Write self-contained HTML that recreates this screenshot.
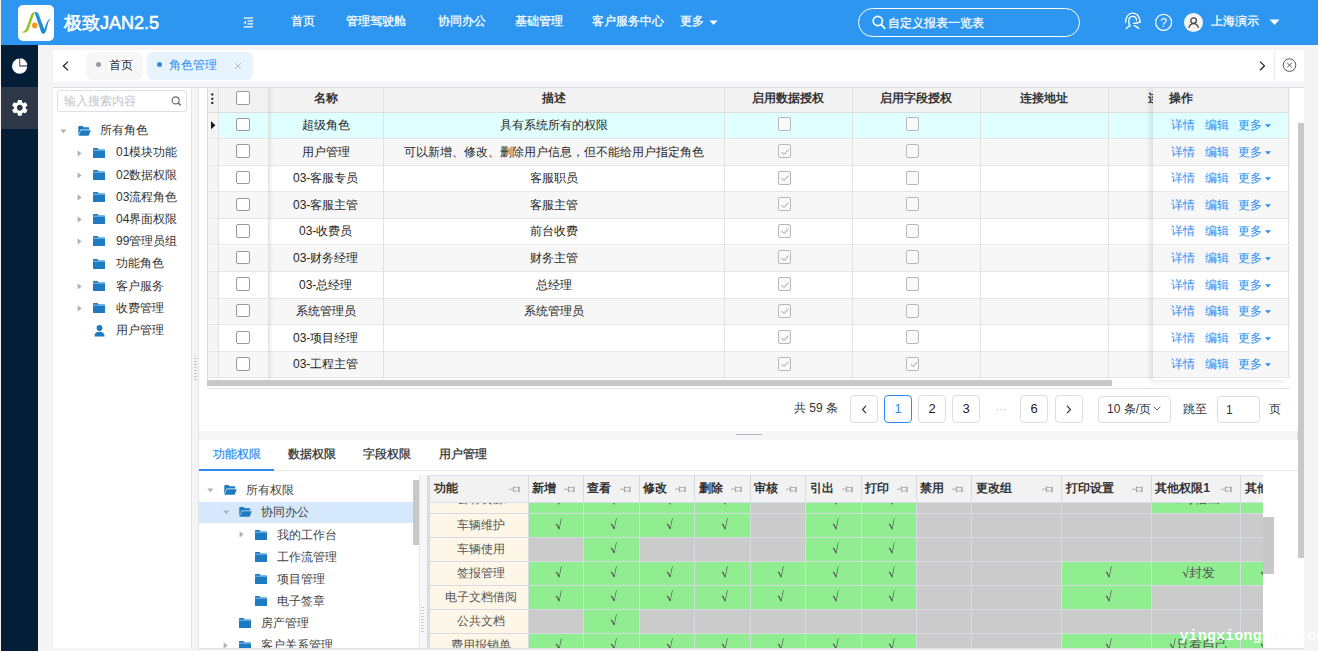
<!DOCTYPE html>
<html><head><meta charset="utf-8">
<style>
*{box-sizing:border-box;margin:0;padding:0}
html,body{width:1318px;height:651px;overflow:hidden;background:#f4f4f4;font-family:"Liberation Sans",sans-serif;font-size:12px;color:#333}
.a{position:absolute}
#hdr{left:0;top:0;width:1318px;height:45px;background:#2d96f1}
#leftline{left:0;top:0;width:1px;height:651px;background:#f4efe8;z-index:5}
#side{left:1px;top:45px;width:37px;height:606px;background:#041e38}
#side .it2{left:0;top:42px;width:37px;height:42px;background:#2e3747}
.logo{left:18px;top:5px;width:36px;height:36px;background:#fff;border-radius:5px}
.brand{left:64px;top:10.8px;font-size:18px;font-weight:normal;-webkit-text-stroke:0.55px #fff;color:#fff;line-height:24px;white-space:nowrap}
.nav{top:12px;font-size:12px;color:#fff;line-height:18px;white-space:nowrap;-webkit-text-stroke:0.25px #fff}
.search{left:858px;top:8px;width:222px;height:29px;border:1px solid #fff;border-radius:15px;color:#fff}
.avatar{left:1184px;top:13px;width:19px;height:19px;border-radius:50%;background:#f7f6f4}
.tabbar{left:53px;top:50px;width:1251px;height:32px;background:#fff}
.tab{top:2px;height:28px;border-radius:6px;font-size:12px;white-space:nowrap}
#lp{left:53px;top:87px;width:139px;height:561px;background:#fff;border-right:1px solid #e4e4e4}
#mp{left:198px;top:87px;width:1106px;height:344px;background:#fff;border-left:1px solid #e4e4e4}
#bp{left:198px;top:440px;width:1106px;height:208px;background:#fff;border-left:1px solid #e4e4e4}
.tt{font-size:12px;line-height:16px;color:#333;white-space:nowrap}
.th{font-size:12px;font-weight:bold;line-height:16px;color:#333;text-align:center;white-space:nowrap}
.td{font-size:12px;line-height:16px;color:#262626;text-align:center;white-space:nowrap}
.op{font-size:12px;line-height:16px;color:#2d8cf0;white-space:nowrap}
.cb{width:13.6px;height:13.6px;border:1px solid #999;border-radius:2px;background:#fff}
.cb2{width:13px;height:14px;border:1px solid #b8b8b8;border-radius:2px;background:#f9f9f9}
.fn{font-size:12px;line-height:16px;color:#555;text-align:center;white-space:nowrap}
.chk{font-size:13px;line-height:16px;color:#555;text-align:center;white-space:nowrap}
.th{margin-top:-2px}
.td,.op{margin-top:-1px}
.tt{margin-top:-1.7px}
.tab span{margin-top:-1.5px}

</style></head><body>
<div id="leftline" class="a"></div>
<div id="hdr" class="a">
  <div class="a logo"><svg width="36" height="36" viewBox="0 0 36 36">
    <path d="M3.6 27.2 Q8.6 28.8 10.6 24.6 L16.8 6.8 Q14.2 7.2 13 10 L8 24 Q6.8 26.6 3.6 27.2 Z" fill="#8fc31f"/>
    <path d="M16.6 7.6 Q18.6 6.2 20.4 8.8 L26.4 24.6 Q27.6 19.6 29.2 16.8 Q30.6 14.2 32.6 13.4 Q30.4 16 29.4 20.4 Q28.4 26.4 26.4 28.6 Q24.6 29.8 23.2 27.2 Z" fill="#1a8fd6"/>
    <circle cx="16.8" cy="20.4" r="2.8" fill="#f39a1e"/>
  </svg></div>
  <div class="a brand">极致JAN2.5</div>
  <svg class="a" style="left:243px;top:17px" width="11" height="11" viewBox="0 0 11 11">
    <g fill="#fff" opacity="0.75"><rect x="0.8" y="0.2" width="9.3" height="1.7"/><rect x="4.5" y="3.2" width="5.6" height="1.6"/><rect x="4.5" y="6" width="5.6" height="1.7"/><rect x="0.8" y="9" width="9.3" height="1.7"/></g>
    <path d="M0.6 5.5 L3 3.8 L3 7.2 Z" fill="#fff"/>
  </svg>
  <div class="a nav" style="left:291px">首页</div>
  <div class="a nav" style="left:346px">管理驾驶舱</div>
  <div class="a nav" style="left:438px">协同办公</div>
  <div class="a nav" style="left:515px">基础管理</div>
  <div class="a nav" style="left:592px">客户服务中心</div>
  <div class="a nav" style="left:680px">更多</div>
  <svg class="a" style="left:708.6px;top:19.7px" width="9" height="6" viewBox="0 0 9 6"><path d="M0.5 0.5 L8.5 0.5 L4.5 5 Z" fill="#fff"/></svg>
  <div class="a search"><svg class="a" style="left:13px;top:6px" width="14" height="15" viewBox="0 0 14 15"><circle cx="5.8" cy="6" r="4.6" stroke="#fff" stroke-width="1.7" fill="none"/><path d="M9.2 9.6 L12.6 13.2" stroke="#fff" stroke-width="1.9" stroke-linecap="round"/></svg><span class="a" style="left:29px;top:5px;font-size:12px;line-height:18px;-webkit-text-stroke:0.25px #fff">自定义报表一览表</span></div>
  <svg class="a" style="left:1124px;top:12px" width="18" height="18" viewBox="0 0 18 18" fill="none" stroke="#fff" stroke-width="1.25" stroke-linecap="round">
    <path d="M1.6 10.5 C1.4 5 4.5 1.2 8.5 1.2 C12.5 1.2 15.5 4.5 16.2 9.8"/>
    <path d="M6 13.6 C4.6 12.5 4.6 10.5 4.8 8.5 C5 6 6.5 4.4 8.6 4.4 C10.8 4.4 12.6 6 12.6 8.6"/>
    <path d="M16.2 9.8 C15 11 12 11.4 9.4 11.4"/>
    <path d="M6 13.6 C4.5 14.4 3 15.2 2.2 16.6"/>
    <path d="M10.4 13.6 C12 14.3 14 15.3 14.8 16.6"/>
  </svg>
  <svg class="a" style="left:1154px;top:13px" width="19" height="19" viewBox="0 0 19 19"><circle cx="9.6" cy="9.3" r="8" stroke="#fff" stroke-width="1.2" fill="none"/><text x="9.6" y="13.6" text-anchor="middle" font-family="Liberation Sans" font-size="12" fill="#fff">?</text></svg>
  <div class="a avatar"><svg class="a" style="left:4px;top:3px" width="12" height="13" viewBox="0 0 12 13" fill="none" stroke="#444" stroke-width="1.3"><circle cx="5.6" cy="4.6" r="2.8"/><path d="M0.8 11.8 C1.4 9 3.2 7.6 5.6 7.6 C8 7.6 9.8 9 10.4 11.8"/></svg></div>
  <div class="a nav" style="left:1211px">上海演示</div>
  <svg class="a" style="left:1269px;top:19px" width="11" height="7" viewBox="0 0 11 7"><path d="M0.5 0.5 L10.5 0.5 L5.5 6 Z" fill="#fff"/></svg>
</div>
<div id="side" class="a">
  <svg class="a" style="left:10.8px;top:13.4px" width="16" height="16" viewBox="0 0 16 16"><path d="M7.4 0.6 L7.4 8.4 L15.2 8.4 A7.6 7.6 0 1 1 7.4 0.6 Z" fill="#fff"/><path d="M8.2 0.3 A7.1 7.1 0 0 1 15.3 7.4 L8.2 7.4 Z" fill="#fff"/></svg>
  <div class="a it2"><svg class="a" style="left:8.8px;top:11.3px" width="19.6" height="19.6" viewBox="0 0 24 24"><path fill="#fff" d="M19.14 12.94c.04-.3.06-.61.06-.94 0-.32-.02-.64-.07-.94l2.03-1.58a.49.49 0 0 0 .12-.61l-1.92-3.32a.488.488 0 0 0-.59-.22l-2.39.96c-.5-.38-1.03-.7-1.62-.94l-.36-2.54a.484.484 0 0 0-.48-.41h-3.84c-.24 0-.43.17-.47.41l-.36 2.54c-.59.24-1.13.57-1.62.94l-2.39-.96c-.22-.08-.47 0-.59.22L2.74 8.87c-.12.21-.08.47.12.61l2.03 1.58c-.05.3-.09.63-.09.94s.02.64.07.94l-2.03 1.58a.49.49 0 0 0-.12.61l1.92 3.32c.12.22.37.29.59.22l2.39-.96c.5.38 1.03.7 1.62.94l.36 2.54c.05.24.24.41.48.41h3.84c.24 0 .44-.17.47-.41l.36-2.54c.59-.24 1.13-.56 1.62-.94l2.39.96c.22.08.47 0 .59-.22l1.92-3.32c.12-.22.07-.47-.12-.61l-2.01-1.58zM12 15.6c-1.98 0-3.6-1.62-3.6-3.6s1.62-3.6 3.6-3.6 3.6 1.62 3.6 3.6-1.62 3.6-3.6 3.6z"/></svg></div>
</div>
<div class="a tabbar">
  <svg class="a" style="left:9px;top:11px" width="7" height="10" viewBox="0 0 7 10"><path d="M6 0.6 L1.4 5 L6 9.4" stroke="#222" stroke-width="1.3" fill="none"/></svg>
  <div class="a tab" style="left:33px;width:57px;background:#f7f7f7"><span class="a" style="left:10px;top:11px;width:5px;height:5px;border-radius:50%;background:#999"></span><span class="a" style="left:22px;top:0;background:#fff;line-height:14px;top:7px;padding:0 1px;color:#222">首页</span></div>
  <div class="a tab" style="left:94px;width:106px;background:#e8f4fd;color:#2d8cf0"><span class="a" style="left:10px;top:11px;width:5px;height:5px;border-radius:50%;background:#2d8cf0"></span><span class="a" style="left:22px;top:7px;line-height:14px">角色管理</span><svg class="a" style="left:87px;top:10px" width="8" height="8" viewBox="0 0 8 8"><path d="M1 1 L7 7 M7 1 L1 7" stroke="#bbb" stroke-width="1"/></svg></div>
  <svg class="a" style="left:1205.5px;top:10.6px" width="7" height="10" viewBox="0 0 7 10"><path d="M1 0.6 L5.4 4.9 L1 9.2" stroke="#222" stroke-width="1.3" fill="none"/></svg>
  <div class="a" style="left:1221px;top:0;width:1px;height:32px;background:#eee"></div>
  <svg class="a" style="left:1229px;top:8px" width="16" height="16" viewBox="0 0 16 16"><circle cx="7.5" cy="7.1" r="6.3" stroke="#555" stroke-width="1" fill="none"/><path d="M5.1 4.7 L9.9 9.5 M9.9 4.7 L5.1 9.5" stroke="#555" stroke-width="1"/></svg>
</div>
<div id="lp" class="a">
<div class="a" style="left:4px;top:3px;width:130px;height:22px;border:1px solid #dcdfe6;border-radius:3px"><span class="a" style="left:6px;top:3px;font-size:12px;line-height:14px;color:#c0c4cc;white-space:nowrap">输入搜索内容</span><svg class="a" style="left:113px;top:5px" width="11" height="11" viewBox="0 0 11 11"><circle cx="4.6" cy="4.4" r="3.5" stroke="#666" stroke-width="1.1" fill="none"/><path d="M7.2 7 L9.8 9.5" stroke="#666" stroke-width="1.4"/></svg></div>
<svg class="a" style="left:6.5px;top:41.5px" width="7" height="5" viewBox="0 0 7 5"><path d="M0.3 0.5 L6.5 0.5 L3.4 4.3 Z" fill="#abb1bb"/></svg>
<svg class="a" style="left:25px;top:39.0px" width="13" height="11" viewBox="0 0 13 11"><path d="M0.3 1 Q0.3 0 1.2 0 L4.6 0 L5.6 1.3 L10.6 1.3 Q11.2 1.3 11.2 2 L11.2 3.4 L2.6 3.4 L0.3 9.5 Z" fill="#1f7bc1"/><path d="M2.8 4.2 L12.8 4.2 L10.6 9.7 L0.6 9.7 Z" fill="#1f7bc1"/></svg>
<span class="a tt" style="left:47px;top:37.0px">所有角色</span>
<svg class="a" style="left:24px;top:62.67px" width="5" height="7" viewBox="0 0 5 7"><path d="M0.6 0.2 L4.6 3.4 L0.6 6.6 Z" fill="#abb1bb"/></svg>
<svg class="a" style="left:40px;top:60.67px" width="12" height="10" viewBox="0 0 12 10"><path d="M0 0.6 Q0 0 0.6 0 L4.6 0 L5.6 1.4 L11.4 1.4 Q12 1.4 12 2 L12 9.4 Q12 10 11.4 10 L0.6 10 Q0 10 0 9.4 Z" fill="#1f7bc1"/><rect x="0" y="1.6" width="12" height="1.3" fill="#6aaee0"/></svg>
<span class="a tt" style="left:63px;top:59.17px">01模块功能</span>
<svg class="a" style="left:24px;top:84.84px" width="5" height="7" viewBox="0 0 5 7"><path d="M0.6 0.2 L4.6 3.4 L0.6 6.6 Z" fill="#abb1bb"/></svg>
<svg class="a" style="left:40px;top:82.84px" width="12" height="10" viewBox="0 0 12 10"><path d="M0 0.6 Q0 0 0.6 0 L4.6 0 L5.6 1.4 L11.4 1.4 Q12 1.4 12 2 L12 9.4 Q12 10 11.4 10 L0.6 10 Q0 10 0 9.4 Z" fill="#1f7bc1"/><rect x="0" y="1.6" width="12" height="1.3" fill="#6aaee0"/></svg>
<span class="a tt" style="left:63px;top:81.34px">02数据权限</span>
<svg class="a" style="left:24px;top:107.01px" width="5" height="7" viewBox="0 0 5 7"><path d="M0.6 0.2 L4.6 3.4 L0.6 6.6 Z" fill="#abb1bb"/></svg>
<svg class="a" style="left:40px;top:105.01px" width="12" height="10" viewBox="0 0 12 10"><path d="M0 0.6 Q0 0 0.6 0 L4.6 0 L5.6 1.4 L11.4 1.4 Q12 1.4 12 2 L12 9.4 Q12 10 11.4 10 L0.6 10 Q0 10 0 9.4 Z" fill="#1f7bc1"/><rect x="0" y="1.6" width="12" height="1.3" fill="#6aaee0"/></svg>
<span class="a tt" style="left:63px;top:103.51px">03流程角色</span>
<svg class="a" style="left:24px;top:129.18px" width="5" height="7" viewBox="0 0 5 7"><path d="M0.6 0.2 L4.6 3.4 L0.6 6.6 Z" fill="#abb1bb"/></svg>
<svg class="a" style="left:40px;top:127.18px" width="12" height="10" viewBox="0 0 12 10"><path d="M0 0.6 Q0 0 0.6 0 L4.6 0 L5.6 1.4 L11.4 1.4 Q12 1.4 12 2 L12 9.4 Q12 10 11.4 10 L0.6 10 Q0 10 0 9.4 Z" fill="#1f7bc1"/><rect x="0" y="1.6" width="12" height="1.3" fill="#6aaee0"/></svg>
<span class="a tt" style="left:63px;top:125.68px">04界面权限</span>
<svg class="a" style="left:24px;top:151.35px" width="5" height="7" viewBox="0 0 5 7"><path d="M0.6 0.2 L4.6 3.4 L0.6 6.6 Z" fill="#abb1bb"/></svg>
<svg class="a" style="left:40px;top:149.35px" width="12" height="10" viewBox="0 0 12 10"><path d="M0 0.6 Q0 0 0.6 0 L4.6 0 L5.6 1.4 L11.4 1.4 Q12 1.4 12 2 L12 9.4 Q12 10 11.4 10 L0.6 10 Q0 10 0 9.4 Z" fill="#1f7bc1"/><rect x="0" y="1.6" width="12" height="1.3" fill="#6aaee0"/></svg>
<span class="a tt" style="left:63px;top:147.85px">99管理员组</span>
<svg class="a" style="left:40px;top:171.52px" width="12" height="10" viewBox="0 0 12 10"><path d="M0 0.6 Q0 0 0.6 0 L4.6 0 L5.6 1.4 L11.4 1.4 Q12 1.4 12 2 L12 9.4 Q12 10 11.4 10 L0.6 10 Q0 10 0 9.4 Z" fill="#1f7bc1"/><rect x="0" y="1.6" width="12" height="1.3" fill="#6aaee0"/></svg>
<span class="a tt" style="left:63px;top:170.02px">功能角色</span>
<svg class="a" style="left:24px;top:195.69px" width="5" height="7" viewBox="0 0 5 7"><path d="M0.6 0.2 L4.6 3.4 L0.6 6.6 Z" fill="#abb1bb"/></svg>
<svg class="a" style="left:40px;top:193.69px" width="12" height="10" viewBox="0 0 12 10"><path d="M0 0.6 Q0 0 0.6 0 L4.6 0 L5.6 1.4 L11.4 1.4 Q12 1.4 12 2 L12 9.4 Q12 10 11.4 10 L0.6 10 Q0 10 0 9.4 Z" fill="#1f7bc1"/><rect x="0" y="1.6" width="12" height="1.3" fill="#6aaee0"/></svg>
<span class="a tt" style="left:63px;top:192.19px">客户服务</span>
<svg class="a" style="left:24px;top:217.86px" width="5" height="7" viewBox="0 0 5 7"><path d="M0.6 0.2 L4.6 3.4 L0.6 6.6 Z" fill="#abb1bb"/></svg>
<svg class="a" style="left:40px;top:215.86px" width="12" height="10" viewBox="0 0 12 10"><path d="M0 0.6 Q0 0 0.6 0 L4.6 0 L5.6 1.4 L11.4 1.4 Q12 1.4 12 2 L12 9.4 Q12 10 11.4 10 L0.6 10 Q0 10 0 9.4 Z" fill="#1f7bc1"/><rect x="0" y="1.6" width="12" height="1.3" fill="#6aaee0"/></svg>
<span class="a tt" style="left:63px;top:214.36px">收费管理</span>
<svg class="a" style="left:40.8px;top:237.53px" width="11" height="12" viewBox="0 0 11 12"><circle cx="5.5" cy="3" r="2.9" fill="#1f7bc1"/><path d="M0.4 11.6 Q0.4 6.8 5.5 6.8 Q10.6 6.8 10.6 11.6 Z" fill="#1f7bc1"/></svg>
<span class="a tt" style="left:63px;top:236.53px">用户管理</span>
</div>
<div class="a" style="left:191px;top:87px;width:1px;height:561px;background:#e4e4e4"></div>
<div id="mp" class="a"></div>
<div class="a" style="left:194px;top:358px;width:3px;height:24px;background:repeating-linear-gradient(#c8c8c8 0 1px,transparent 1px 3px)"></div>
<div class="a" style="left:207px;top:87px;width:1083px;height:300px;overflow:hidden">
<div class="a" style="left:0;top:0;width:1083px;height:25.5px;background:#f2f2f2;border-bottom:1px solid #dedede"></div>
<div class="a th" style="left:61.30000000000001px;top:5px;width:114.69999999999999px">名称</div>
<div class="a th" style="left:176px;top:5px;width:341px">描述</div>
<div class="a th" style="left:517px;top:5px;width:128px">启用数据授权</div>
<div class="a th" style="left:645px;top:5px;width:128px">启用字段授权</div>
<div class="a th" style="left:773px;top:5px;width:128px">连接地址</div>
<div class="a th" style="left:901px;top:5px;width:128px">连接类型</div>
<div class="a" style="left:10.5px;top:25.50px;width:1073px;height:26.60px;background:#e0ffff;border-bottom:1px solid #e6e6e6"></div>
<div class="a" style="left:0;top:25.50px;width:10.5px;height:26.60px;background:#f5f5f5;border-bottom:1px solid #e6e6e6"></div>
<div class="a td" style="left:61.30000000000001px;top:31.00px;width:114.69999999999999px">超级角色</div>
<div class="a td" style="left:176px;top:31.00px;width:341px">具有系统所有的权限</div>
<div class="a cb" style="left:29.19999999999999px;top:30.70px"></div>
<div class="a cb2" style="left:570.8px;top:30.40px"></div>
<div class="a cb2" style="left:699.2px;top:30.40px"></div>
<svg class="a" style="left:4px;top:34.40px" width="5" height="9" viewBox="0 0 5 9"><path d="M0 0.2 L4.4 4.2 L0 8.3 Z" fill="#111"/></svg>
<div class="a" style="left:10.5px;top:52.10px;width:1073px;height:26.60px;background:#f7f7f7;border-bottom:1px solid #e6e6e6"></div>
<div class="a" style="left:0;top:52.10px;width:10.5px;height:26.60px;background:#f5f5f5;border-bottom:1px solid #e6e6e6"></div>
<div class="a td" style="left:61.30000000000001px;top:57.60px;width:114.69999999999999px">用户管理</div>
<div class="a td" style="left:176px;top:57.60px;width:341px">可以新增、修改、删除用户信息，但不能给用户指定角色</div>
<div class="a cb" style="left:29.19999999999999px;top:57.30px"></div>
<div class="a cb2" style="left:570.8px;top:57.00px"><svg class="a" style="left:1.5px;top:1.5px" width="10" height="10" viewBox="0 0 10 10"><path d="M1.5 5 L4 7.5 L8.6 2.6" stroke="#9a9a9a" stroke-width="1" fill="none"/></svg></div>
<div class="a cb2" style="left:699.2px;top:57.00px"></div>
<div class="a" style="left:10.5px;top:78.70px;width:1073px;height:26.60px;background:#fff;border-bottom:1px solid #e6e6e6"></div>
<div class="a" style="left:0;top:78.70px;width:10.5px;height:26.60px;background:#f5f5f5;border-bottom:1px solid #e6e6e6"></div>
<div class="a td" style="left:61.30000000000001px;top:84.20px;width:114.69999999999999px">03-客服专员</div>
<div class="a td" style="left:176px;top:84.20px;width:341px">客服职员</div>
<div class="a cb" style="left:29.19999999999999px;top:83.90px"></div>
<div class="a cb2" style="left:570.8px;top:83.60px"><svg class="a" style="left:1.5px;top:1.5px" width="10" height="10" viewBox="0 0 10 10"><path d="M1.5 5 L4 7.5 L8.6 2.6" stroke="#9a9a9a" stroke-width="1" fill="none"/></svg></div>
<div class="a cb2" style="left:699.2px;top:83.60px"></div>
<div class="a" style="left:10.5px;top:105.30px;width:1073px;height:26.60px;background:#f7f7f7;border-bottom:1px solid #e6e6e6"></div>
<div class="a" style="left:0;top:105.30px;width:10.5px;height:26.60px;background:#f5f5f5;border-bottom:1px solid #e6e6e6"></div>
<div class="a td" style="left:61.30000000000001px;top:110.80px;width:114.69999999999999px">03-客服主管</div>
<div class="a td" style="left:176px;top:110.80px;width:341px">客服主管</div>
<div class="a cb" style="left:29.19999999999999px;top:110.50px"></div>
<div class="a cb2" style="left:570.8px;top:110.20px"><svg class="a" style="left:1.5px;top:1.5px" width="10" height="10" viewBox="0 0 10 10"><path d="M1.5 5 L4 7.5 L8.6 2.6" stroke="#9a9a9a" stroke-width="1" fill="none"/></svg></div>
<div class="a cb2" style="left:699.2px;top:110.20px"></div>
<div class="a" style="left:10.5px;top:131.90px;width:1073px;height:26.60px;background:#fff;border-bottom:1px solid #e6e6e6"></div>
<div class="a" style="left:0;top:131.90px;width:10.5px;height:26.60px;background:#f5f5f5;border-bottom:1px solid #e6e6e6"></div>
<div class="a td" style="left:61.30000000000001px;top:137.40px;width:114.69999999999999px">03-收费员</div>
<div class="a td" style="left:176px;top:137.40px;width:341px">前台收费</div>
<div class="a cb" style="left:29.19999999999999px;top:137.10px"></div>
<div class="a cb2" style="left:570.8px;top:136.80px"><svg class="a" style="left:1.5px;top:1.5px" width="10" height="10" viewBox="0 0 10 10"><path d="M1.5 5 L4 7.5 L8.6 2.6" stroke="#9a9a9a" stroke-width="1" fill="none"/></svg></div>
<div class="a cb2" style="left:699.2px;top:136.80px"></div>
<div class="a" style="left:10.5px;top:158.50px;width:1073px;height:26.60px;background:#f7f7f7;border-bottom:1px solid #e6e6e6"></div>
<div class="a" style="left:0;top:158.50px;width:10.5px;height:26.60px;background:#f5f5f5;border-bottom:1px solid #e6e6e6"></div>
<div class="a td" style="left:61.30000000000001px;top:164.00px;width:114.69999999999999px">03-财务经理</div>
<div class="a td" style="left:176px;top:164.00px;width:341px">财务主管</div>
<div class="a cb" style="left:29.19999999999999px;top:163.70px"></div>
<div class="a cb2" style="left:570.8px;top:163.40px"><svg class="a" style="left:1.5px;top:1.5px" width="10" height="10" viewBox="0 0 10 10"><path d="M1.5 5 L4 7.5 L8.6 2.6" stroke="#9a9a9a" stroke-width="1" fill="none"/></svg></div>
<div class="a cb2" style="left:699.2px;top:163.40px"></div>
<div class="a" style="left:10.5px;top:185.10px;width:1073px;height:26.60px;background:#fff;border-bottom:1px solid #e6e6e6"></div>
<div class="a" style="left:0;top:185.10px;width:10.5px;height:26.60px;background:#f5f5f5;border-bottom:1px solid #e6e6e6"></div>
<div class="a td" style="left:61.30000000000001px;top:190.60px;width:114.69999999999999px">03-总经理</div>
<div class="a td" style="left:176px;top:190.60px;width:341px">总经理</div>
<div class="a cb" style="left:29.19999999999999px;top:190.30px"></div>
<div class="a cb2" style="left:570.8px;top:190.00px"><svg class="a" style="left:1.5px;top:1.5px" width="10" height="10" viewBox="0 0 10 10"><path d="M1.5 5 L4 7.5 L8.6 2.6" stroke="#9a9a9a" stroke-width="1" fill="none"/></svg></div>
<div class="a cb2" style="left:699.2px;top:190.00px"></div>
<div class="a" style="left:10.5px;top:211.70px;width:1073px;height:26.60px;background:#f7f7f7;border-bottom:1px solid #e6e6e6"></div>
<div class="a" style="left:0;top:211.70px;width:10.5px;height:26.60px;background:#f5f5f5;border-bottom:1px solid #e6e6e6"></div>
<div class="a td" style="left:61.30000000000001px;top:217.20px;width:114.69999999999999px">系统管理员</div>
<div class="a td" style="left:176px;top:217.20px;width:341px">系统管理员</div>
<div class="a cb" style="left:29.19999999999999px;top:216.90px"></div>
<div class="a cb2" style="left:570.8px;top:216.60px"><svg class="a" style="left:1.5px;top:1.5px" width="10" height="10" viewBox="0 0 10 10"><path d="M1.5 5 L4 7.5 L8.6 2.6" stroke="#9a9a9a" stroke-width="1" fill="none"/></svg></div>
<div class="a cb2" style="left:699.2px;top:216.60px"></div>
<div class="a" style="left:10.5px;top:238.30px;width:1073px;height:26.60px;background:#fff;border-bottom:1px solid #e6e6e6"></div>
<div class="a" style="left:0;top:238.30px;width:10.5px;height:26.60px;background:#f5f5f5;border-bottom:1px solid #e6e6e6"></div>
<div class="a td" style="left:61.30000000000001px;top:243.80px;width:114.69999999999999px">03-项目经理</div>
<div class="a cb" style="left:29.19999999999999px;top:243.50px"></div>
<div class="a cb2" style="left:570.8px;top:243.20px"><svg class="a" style="left:1.5px;top:1.5px" width="10" height="10" viewBox="0 0 10 10"><path d="M1.5 5 L4 7.5 L8.6 2.6" stroke="#9a9a9a" stroke-width="1" fill="none"/></svg></div>
<div class="a cb2" style="left:699.2px;top:243.20px"></div>
<div class="a" style="left:10.5px;top:264.90px;width:1073px;height:26.60px;background:#f7f7f7;border-bottom:1px solid #e6e6e6"></div>
<div class="a" style="left:0;top:264.90px;width:10.5px;height:26.60px;background:#f5f5f5;border-bottom:1px solid #e6e6e6"></div>
<div class="a td" style="left:61.30000000000001px;top:270.40px;width:114.69999999999999px">03-工程主管</div>
<div class="a cb" style="left:29.19999999999999px;top:270.10px"></div>
<div class="a cb2" style="left:570.8px;top:269.80px"><svg class="a" style="left:1.5px;top:1.5px" width="10" height="10" viewBox="0 0 10 10"><path d="M1.5 5 L4 7.5 L8.6 2.6" stroke="#9a9a9a" stroke-width="1" fill="none"/></svg></div>
<div class="a cb2" style="left:699.2px;top:269.80px"><svg class="a" style="left:1.5px;top:1.5px" width="10" height="10" viewBox="0 0 10 10"><path d="M1.5 5 L4 7.5 L8.6 2.6" stroke="#9a9a9a" stroke-width="1" fill="none"/></svg></div>
<div class="a" style="left:10.5px;top:0;width:1px;height:291.5px;background:#e2e2e2"></div>
<div class="a" style="left:61.30000000000001px;top:0;width:1px;height:291.5px;background:#e2e2e2"></div>
<div class="a" style="left:176px;top:0;width:1px;height:291.5px;background:#e2e2e2"></div>
<div class="a" style="left:517px;top:0;width:1px;height:291.5px;background:#e2e2e2"></div>
<div class="a" style="left:645px;top:0;width:1px;height:291.5px;background:#e2e2e2"></div>
<div class="a" style="left:773px;top:0;width:1px;height:291.5px;background:#e2e2e2"></div>
<div class="a" style="left:901px;top:0;width:1px;height:291.5px;background:#e2e2e2"></div>
<div class="a" style="left:0;top:0;width:1px;height:291.5px;background:#dcdcdc"></div>
<div class="a cb" style="left:29.19999999999999px;top:4.2px"></div>
<svg class="a" style="left:3.8px;top:6px" width="3" height="11" viewBox="0 0 3 11"><circle cx="1.3" cy="1.5" r="1.15" fill="#222"/><circle cx="1.3" cy="5.8" r="1.15" fill="#222"/><circle cx="1.3" cy="10" r="1.15" fill="#222"/></svg>
<div class="a" style="left:61.5px;top:0;width:4px;height:291.5px;background:linear-gradient(90deg,rgba(0,0,0,0.07),rgba(0,0,0,0))"></div>
<div class="a" style="left:946px;top:0;width:136px;height:292.5px;background:transparent;box-shadow:-3px 1px 5px rgba(0,0,0,0.10)"></div>
<div class="a" style="left:946px;top:0;width:136px;height:25.5px;background:#f2f2f2;border-bottom:1px solid #dedede;border-right:1px solid #e2e2e2"></div>
<div class="a th" style="left:962px;top:5px;text-align:left">操作</div>
<div class="a" style="left:946px;top:25.50px;width:136px;height:26.60px;background:#e0ffff;border-bottom:1px solid #e6e6e6;border-right:1px solid #e2e2e2"></div>
<div class="a op" style="left:964px;top:31.00px">详情</div>
<div class="a op" style="left:998px;top:31.00px">编辑</div>
<div class="a op" style="left:1031px;top:31.00px">更多</div>
<svg class="a" style="left:1057.5px;top:37.00px" width="6" height="4" viewBox="0 0 6 4"><path d="M0 0.3 L6 0.3 L3 3.4 Z" fill="#2d8cf0"/></svg>
<div class="a" style="left:946px;top:52.10px;width:136px;height:26.60px;background:#f7f7f7;border-bottom:1px solid #e6e6e6;border-right:1px solid #e2e2e2"></div>
<div class="a op" style="left:964px;top:57.60px">详情</div>
<div class="a op" style="left:998px;top:57.60px">编辑</div>
<div class="a op" style="left:1031px;top:57.60px">更多</div>
<svg class="a" style="left:1057.5px;top:63.60px" width="6" height="4" viewBox="0 0 6 4"><path d="M0 0.3 L6 0.3 L3 3.4 Z" fill="#2d8cf0"/></svg>
<div class="a" style="left:946px;top:78.70px;width:136px;height:26.60px;background:#fff;border-bottom:1px solid #e6e6e6;border-right:1px solid #e2e2e2"></div>
<div class="a op" style="left:964px;top:84.20px">详情</div>
<div class="a op" style="left:998px;top:84.20px">编辑</div>
<div class="a op" style="left:1031px;top:84.20px">更多</div>
<svg class="a" style="left:1057.5px;top:90.20px" width="6" height="4" viewBox="0 0 6 4"><path d="M0 0.3 L6 0.3 L3 3.4 Z" fill="#2d8cf0"/></svg>
<div class="a" style="left:946px;top:105.30px;width:136px;height:26.60px;background:#f7f7f7;border-bottom:1px solid #e6e6e6;border-right:1px solid #e2e2e2"></div>
<div class="a op" style="left:964px;top:110.80px">详情</div>
<div class="a op" style="left:998px;top:110.80px">编辑</div>
<div class="a op" style="left:1031px;top:110.80px">更多</div>
<svg class="a" style="left:1057.5px;top:116.80px" width="6" height="4" viewBox="0 0 6 4"><path d="M0 0.3 L6 0.3 L3 3.4 Z" fill="#2d8cf0"/></svg>
<div class="a" style="left:946px;top:131.90px;width:136px;height:26.60px;background:#fff;border-bottom:1px solid #e6e6e6;border-right:1px solid #e2e2e2"></div>
<div class="a op" style="left:964px;top:137.40px">详情</div>
<div class="a op" style="left:998px;top:137.40px">编辑</div>
<div class="a op" style="left:1031px;top:137.40px">更多</div>
<svg class="a" style="left:1057.5px;top:143.40px" width="6" height="4" viewBox="0 0 6 4"><path d="M0 0.3 L6 0.3 L3 3.4 Z" fill="#2d8cf0"/></svg>
<div class="a" style="left:946px;top:158.50px;width:136px;height:26.60px;background:#f7f7f7;border-bottom:1px solid #e6e6e6;border-right:1px solid #e2e2e2"></div>
<div class="a op" style="left:964px;top:164.00px">详情</div>
<div class="a op" style="left:998px;top:164.00px">编辑</div>
<div class="a op" style="left:1031px;top:164.00px">更多</div>
<svg class="a" style="left:1057.5px;top:170.00px" width="6" height="4" viewBox="0 0 6 4"><path d="M0 0.3 L6 0.3 L3 3.4 Z" fill="#2d8cf0"/></svg>
<div class="a" style="left:946px;top:185.10px;width:136px;height:26.60px;background:#fff;border-bottom:1px solid #e6e6e6;border-right:1px solid #e2e2e2"></div>
<div class="a op" style="left:964px;top:190.60px">详情</div>
<div class="a op" style="left:998px;top:190.60px">编辑</div>
<div class="a op" style="left:1031px;top:190.60px">更多</div>
<svg class="a" style="left:1057.5px;top:196.60px" width="6" height="4" viewBox="0 0 6 4"><path d="M0 0.3 L6 0.3 L3 3.4 Z" fill="#2d8cf0"/></svg>
<div class="a" style="left:946px;top:211.70px;width:136px;height:26.60px;background:#f7f7f7;border-bottom:1px solid #e6e6e6;border-right:1px solid #e2e2e2"></div>
<div class="a op" style="left:964px;top:217.20px">详情</div>
<div class="a op" style="left:998px;top:217.20px">编辑</div>
<div class="a op" style="left:1031px;top:217.20px">更多</div>
<svg class="a" style="left:1057.5px;top:223.20px" width="6" height="4" viewBox="0 0 6 4"><path d="M0 0.3 L6 0.3 L3 3.4 Z" fill="#2d8cf0"/></svg>
<div class="a" style="left:946px;top:238.30px;width:136px;height:26.60px;background:#fff;border-bottom:1px solid #e6e6e6;border-right:1px solid #e2e2e2"></div>
<div class="a op" style="left:964px;top:243.80px">详情</div>
<div class="a op" style="left:998px;top:243.80px">编辑</div>
<div class="a op" style="left:1031px;top:243.80px">更多</div>
<svg class="a" style="left:1057.5px;top:249.80px" width="6" height="4" viewBox="0 0 6 4"><path d="M0 0.3 L6 0.3 L3 3.4 Z" fill="#2d8cf0"/></svg>
<div class="a" style="left:946px;top:264.90px;width:136px;height:26.60px;background:#f7f7f7;border-bottom:1px solid #e6e6e6;border-right:1px solid #e2e2e2"></div>
<div class="a op" style="left:964px;top:270.40px">详情</div>
<div class="a op" style="left:998px;top:270.40px">编辑</div>
<div class="a op" style="left:1031px;top:270.40px">更多</div>
<svg class="a" style="left:1057.5px;top:276.40px" width="6" height="4" viewBox="0 0 6 4"><path d="M0 0.3 L6 0.3 L3 3.4 Z" fill="#2d8cf0"/></svg>
</div>
<div class="a" style="left:53px;top:87px;width:1251px;height:1px;background:#dcdfe6"></div>
<div class="a" style="left:207px;top:379.5px;width:905px;height:6.5px;background:#c8c8c8"></div>
<div class="a" style="left:207px;top:388px;width:1083px;height:1px;background:#e4e4e4"></div>
<div class="a" style="left:1298px;top:123px;width:6px;height:435px;background:#c8c8c8"></div>
<div class="a pg" style="left:794px;top:400px;font-size:12px;line-height:16px;color:#333">共 59 条</div>
<div class="a" style="left:850px;top:395px;width:28px;height:28px;border:1px solid #dcdee2;border-radius:4px;text-align:center;line-height:25px;font-size:13px;color:#222;background:#fff"><svg width="6" height="9" viewBox="0 0 6 9" style="vertical-align:-1px"><path d="M5 0.8 L1.5 4.5 L5 8.2" stroke="#333" stroke-width="1.2" fill="none"/></svg></div>
<div class="a" style="left:884px;top:395px;width:28px;height:28px;border:1px solid #2d8cf0;border-radius:4px;text-align:center;line-height:25px;font-size:13px;color:#2d8cf0;background:#fff">1</div>
<div class="a" style="left:918px;top:395px;width:28px;height:28px;border:1px solid #dcdee2;border-radius:4px;text-align:center;line-height:25px;font-size:13px;color:#222;background:#fff">2</div>
<div class="a" style="left:952px;top:395px;width:28px;height:28px;border:1px solid #dcdee2;border-radius:4px;text-align:center;line-height:25px;font-size:13px;color:#222;background:#fff">3</div>
<div class="a" style="left:995.5px;top:400.5px;font-size:11px;color:#c0c0c0;line-height:16px">···</div>
<div class="a" style="left:1020px;top:395px;width:28px;height:28px;border:1px solid #dcdee2;border-radius:4px;text-align:center;line-height:25px;font-size:13px;color:#222;background:#fff">6</div>
<div class="a" style="left:1055px;top:395px;width:28px;height:28px;border:1px solid #dcdee2;border-radius:4px;text-align:center;line-height:25px;font-size:13px;color:#222;background:#fff"><svg width="6" height="9" viewBox="0 0 6 9" style="vertical-align:-1px"><path d="M1 0.8 L4.5 4.5 L1 8.2" stroke="#333" stroke-width="1.2" fill="none"/></svg></div>
<div class="a" style="left:1098px;top:396px;width:73px;height:27px;border:1px solid #dcdee2;border-radius:4px;background:#fff"><span class="a" style="left:8px;top:4px;font-size:12px;line-height:16px;color:#333;white-space:nowrap">10 条/页</span><svg class="a" style="left:54px;top:9px" width="8" height="5" viewBox="0 0 8 5"><path d="M0.6 0.6 L4 4 L7.4 0.6" stroke="#666" stroke-width="1" fill="none"/></svg></div>
<div class="a" style="left:1183px;top:401px;font-size:12px;line-height:16px;color:#333">跳至</div>
<div class="a" style="left:1217px;top:396px;width:43px;height:27px;border:1px solid #dcdee2;border-radius:4px;background:#fff"><span class="a" style="left:8px;top:5px;font-size:12px;line-height:16px;color:#333">1</span></div>
<div class="a" style="left:1269px;top:401px;font-size:12px;line-height:16px;color:#333">页</div>
<div id="bp" class="a"></div>
<div class="a" style="left:198px;top:431px;width:1100px;height:9px;background:#f7f7f7;border-left:1px solid #dedede;border-right:1px solid #dde0e8"></div>
<div class="a" style="left:735.5px;top:434px;width:26.5px;height:1px;background:#b4b8c4"></div>
<div class="a" style="left:212.8px;top:445.5px;font-size:12px;line-height:16px;white-space:nowrap;color:#2d8cf0;-webkit-text-stroke:0.2px #2d8cf0">功能权限</div>
<div class="a" style="left:287.6px;top:445.5px;font-size:12px;line-height:16px;white-space:nowrap;color:#333;-webkit-text-stroke:0.3px #333">数据权限</div>
<div class="a" style="left:363.4px;top:445.5px;font-size:12px;line-height:16px;white-space:nowrap;color:#333;-webkit-text-stroke:0.3px #333">字段权限</div>
<div class="a" style="left:438.7px;top:445.5px;font-size:12px;line-height:16px;white-space:nowrap;color:#333;-webkit-text-stroke:0.3px #333">用户管理</div>
<div class="a" style="left:199px;top:470px;width:1099px;height:1px;background:#e8eaec"></div>
<div class="a" style="left:199px;top:469px;width:75px;height:2px;background:#2d8cf0"></div>
<div class="a" style="left:199px;top:471px;width:228px;height:177px;overflow:hidden">
<div class="a" style="left:0;top:31px;width:214px;height:21px;background:#d6e8fc"></div>
<svg class="a" style="left:7.7px;top:16.5px" width="7" height="5" viewBox="0 0 7 5"><path d="M0.3 0.5 L6.5 0.5 L3.4 4.3 Z" fill="#abb1bb"/></svg>
<svg class="a" style="left:25px;top:14.0px" width="13" height="11" viewBox="0 0 13 11"><path d="M0.3 1 Q0.3 0 1.2 0 L4.6 0 L5.6 1.3 L10.6 1.3 Q11.2 1.3 11.2 2 L11.2 3.4 L2.6 3.4 L0.3 9.5 Z" fill="#1f7bc1"/><path d="M2.8 4.2 L12.8 4.2 L10.6 9.7 L0.6 9.7 Z" fill="#1f7bc1"/></svg>
<span class="a tt" style="left:46.60px;top:13.00px;color:#444">所有权限</span>
<svg class="a" style="left:23.5px;top:38.65px" width="7" height="5" viewBox="0 0 7 5"><path d="M0.3 0.5 L6.5 0.5 L3.4 4.3 Z" fill="#abb1bb"/></svg>
<svg class="a" style="left:40.2px;top:36.15px" width="13" height="11" viewBox="0 0 13 11"><path d="M0.3 1 Q0.3 0 1.2 0 L4.6 0 L5.6 1.3 L10.6 1.3 Q11.2 1.3 11.2 2 L11.2 3.4 L2.6 3.4 L0.3 9.5 Z" fill="#1f7bc1"/><path d="M2.8 4.2 L12.8 4.2 L10.6 9.7 L0.6 9.7 Z" fill="#1f7bc1"/></svg>
<span class="a tt" style="left:61.90px;top:35.15px;color:#444">协同办公</span>
<svg class="a" style="left:40px;top:59.8px" width="5" height="7" viewBox="0 0 5 7"><path d="M0.6 0.2 L4.6 3.4 L0.6 6.6 Z" fill="#abb1bb"/></svg>
<svg class="a" style="left:56.3px;top:58.8px" width="12" height="10" viewBox="0 0 12 10"><path d="M0 0.6 Q0 0 0.6 0 L4.6 0 L5.6 1.4 L11.4 1.4 Q12 1.4 12 2 L12 9.4 Q12 10 11.4 10 L0.6 10 Q0 10 0 9.4 Z" fill="#1f7bc1"/><rect x="0" y="1.6" width="12" height="1.3" fill="#6aaee0"/></svg>
<span class="a tt" style="left:78.00px;top:57.30px;color:#444">我的工作台</span>
<svg class="a" style="left:56.3px;top:80.95px" width="12" height="10" viewBox="0 0 12 10"><path d="M0 0.6 Q0 0 0.6 0 L4.6 0 L5.6 1.4 L11.4 1.4 Q12 1.4 12 2 L12 9.4 Q12 10 11.4 10 L0.6 10 Q0 10 0 9.4 Z" fill="#1f7bc1"/><rect x="0" y="1.6" width="12" height="1.3" fill="#6aaee0"/></svg>
<span class="a tt" style="left:78.00px;top:79.45px;color:#444">工作流管理</span>
<svg class="a" style="left:56.3px;top:103.1px" width="12" height="10" viewBox="0 0 12 10"><path d="M0 0.6 Q0 0 0.6 0 L4.6 0 L5.6 1.4 L11.4 1.4 Q12 1.4 12 2 L12 9.4 Q12 10 11.4 10 L0.6 10 Q0 10 0 9.4 Z" fill="#1f7bc1"/><rect x="0" y="1.6" width="12" height="1.3" fill="#6aaee0"/></svg>
<span class="a tt" style="left:78.00px;top:101.60px;color:#444">项目管理</span>
<svg class="a" style="left:56.3px;top:125.25px" width="12" height="10" viewBox="0 0 12 10"><path d="M0 0.6 Q0 0 0.6 0 L4.6 0 L5.6 1.4 L11.4 1.4 Q12 1.4 12 2 L12 9.4 Q12 10 11.4 10 L0.6 10 Q0 10 0 9.4 Z" fill="#1f7bc1"/><rect x="0" y="1.6" width="12" height="1.3" fill="#6aaee0"/></svg>
<span class="a tt" style="left:78.00px;top:123.75px;color:#444">电子签章</span>
<svg class="a" style="left:40.2px;top:147.4px" width="12" height="10" viewBox="0 0 12 10"><path d="M0 0.6 Q0 0 0.6 0 L4.6 0 L5.6 1.4 L11.4 1.4 Q12 1.4 12 2 L12 9.4 Q12 10 11.4 10 L0.6 10 Q0 10 0 9.4 Z" fill="#1f7bc1"/><rect x="0" y="1.6" width="12" height="1.3" fill="#6aaee0"/></svg>
<span class="a tt" style="left:62.40px;top:145.90px;color:#444">房产管理</span>
<svg class="a" style="left:24.4px;top:170.55px" width="5" height="7" viewBox="0 0 5 7"><path d="M0.6 0.2 L4.6 3.4 L0.6 6.6 Z" fill="#abb1bb"/></svg>
<svg class="a" style="left:40.2px;top:169.55px" width="12" height="10" viewBox="0 0 12 10"><path d="M0 0.6 Q0 0 0.6 0 L4.6 0 L5.6 1.4 L11.4 1.4 Q12 1.4 12 2 L12 9.4 Q12 10 11.4 10 L0.6 10 Q0 10 0 9.4 Z" fill="#1f7bc1"/><rect x="0" y="1.6" width="12" height="1.3" fill="#6aaee0"/></svg>
<span class="a tt" style="left:62.40px;top:168.05px;color:#444">客户关系管理</span>
<div class="a" style="left:214px;top:9px;width:6px;height:65px;background:#c8c8c8"></div>
<div class="a" style="left:220px;top:4px;width:8px;height:173px;background:#f7f7f7;border-left:1px solid #e6e6e6"></div>
<div class="a" style="left:222px;top:136px;width:3px;height:26px;background:repeating-linear-gradient(#cfcfcf 0 1px,transparent 1px 3px)"></div>
</div>
<div class="a" style="left:427px;top:475px;width:835.5px;height:173px;overflow:hidden;background:#fff">
<div class="a" style="left:0;top:0;width:3px;height:173px;background:#d6dde5"></div>
<div class="a" style="left:0;top:0;width:836px;height:1px;background:#dde3ea"></div>
<div class="a" style="left:3px;top:1px;width:833px;height:27px;background:#f2f2f2;border-bottom:1px solid #d5dde6"></div>
<div class="a th" style="left:7.00px;top:7.2px;text-align:left">功能</div>
<svg class="a" style="left:81.9px;top:10.5px" width="11" height="7" viewBox="0 0 11 7"><path d="M0 3.2 L4.5 3.2" stroke="#aaa" stroke-width="1"/><path d="M4.5 0.3 L4.5 6.3 M10 0.5 L10 6.5" stroke="#aaa" stroke-width="1.1"/><rect x="4.5" y="1.6" width="5.5" height="3.4" fill="none" stroke="#aaa" stroke-width="0.9"/></svg>
<div class="a" style="left:100.90px;top:1px;width:1px;height:172px;background:#d6dbe1"></div>
<div class="a th" style="left:105.40px;top:7.2px;text-align:left">新增</div>
<svg class="a" style="left:136.7px;top:10.5px" width="11" height="7" viewBox="0 0 11 7"><path d="M0 3.2 L4.5 3.2" stroke="#aaa" stroke-width="1"/><path d="M4.5 0.3 L4.5 6.3 M10 0.5 L10 6.5" stroke="#aaa" stroke-width="1.1"/><rect x="4.5" y="1.6" width="5.5" height="3.4" fill="none" stroke="#aaa" stroke-width="0.9"/></svg>
<div class="a" style="left:155.70px;top:1px;width:1px;height:172px;background:#d6dbe1"></div>
<div class="a th" style="left:160.20px;top:7.2px;text-align:left">查看</div>
<svg class="a" style="left:192.7px;top:10.5px" width="11" height="7" viewBox="0 0 11 7"><path d="M0 3.2 L4.5 3.2" stroke="#aaa" stroke-width="1"/><path d="M4.5 0.3 L4.5 6.3 M10 0.5 L10 6.5" stroke="#aaa" stroke-width="1.1"/><rect x="4.5" y="1.6" width="5.5" height="3.4" fill="none" stroke="#aaa" stroke-width="0.9"/></svg>
<div class="a" style="left:211.70px;top:1px;width:1px;height:172px;background:#d6dbe1"></div>
<div class="a th" style="left:216.20px;top:7.2px;text-align:left">修改</div>
<svg class="a" style="left:248.0px;top:10.5px" width="11" height="7" viewBox="0 0 11 7"><path d="M0 3.2 L4.5 3.2" stroke="#aaa" stroke-width="1"/><path d="M4.5 0.3 L4.5 6.3 M10 0.5 L10 6.5" stroke="#aaa" stroke-width="1.1"/><rect x="4.5" y="1.6" width="5.5" height="3.4" fill="none" stroke="#aaa" stroke-width="0.9"/></svg>
<div class="a" style="left:267.00px;top:1px;width:1px;height:172px;background:#d6dbe1"></div>
<div class="a th" style="left:271.50px;top:7.2px;text-align:left">删除</div>
<svg class="a" style="left:303.7px;top:10.5px" width="11" height="7" viewBox="0 0 11 7"><path d="M0 3.2 L4.5 3.2" stroke="#aaa" stroke-width="1"/><path d="M4.5 0.3 L4.5 6.3 M10 0.5 L10 6.5" stroke="#aaa" stroke-width="1.1"/><rect x="4.5" y="1.6" width="5.5" height="3.4" fill="none" stroke="#aaa" stroke-width="0.9"/></svg>
<div class="a" style="left:322.70px;top:1px;width:1px;height:172px;background:#d6dbe1"></div>
<div class="a th" style="left:327.20px;top:7.2px;text-align:left">审核</div>
<svg class="a" style="left:359.3px;top:10.5px" width="11" height="7" viewBox="0 0 11 7"><path d="M0 3.2 L4.5 3.2" stroke="#aaa" stroke-width="1"/><path d="M4.5 0.3 L4.5 6.3 M10 0.5 L10 6.5" stroke="#aaa" stroke-width="1.1"/><rect x="4.5" y="1.6" width="5.5" height="3.4" fill="none" stroke="#aaa" stroke-width="0.9"/></svg>
<div class="a" style="left:378.30px;top:1px;width:1px;height:172px;background:#d6dbe1"></div>
<div class="a th" style="left:382.80px;top:7.2px;text-align:left">引出</div>
<svg class="a" style="left:414.9px;top:10.5px" width="11" height="7" viewBox="0 0 11 7"><path d="M0 3.2 L4.5 3.2" stroke="#aaa" stroke-width="1"/><path d="M4.5 0.3 L4.5 6.3 M10 0.5 L10 6.5" stroke="#aaa" stroke-width="1.1"/><rect x="4.5" y="1.6" width="5.5" height="3.4" fill="none" stroke="#aaa" stroke-width="0.9"/></svg>
<div class="a" style="left:433.90px;top:1px;width:1px;height:172px;background:#d6dbe1"></div>
<div class="a th" style="left:438.40px;top:7.2px;text-align:left">打印</div>
<svg class="a" style="left:469.8px;top:10.5px" width="11" height="7" viewBox="0 0 11 7"><path d="M0 3.2 L4.5 3.2" stroke="#aaa" stroke-width="1"/><path d="M4.5 0.3 L4.5 6.3 M10 0.5 L10 6.5" stroke="#aaa" stroke-width="1.1"/><rect x="4.5" y="1.6" width="5.5" height="3.4" fill="none" stroke="#aaa" stroke-width="0.9"/></svg>
<div class="a" style="left:488.80px;top:1px;width:1px;height:172px;background:#d6dbe1"></div>
<div class="a th" style="left:493.30px;top:7.2px;text-align:left">禁用</div>
<svg class="a" style="left:525.4px;top:10.5px" width="11" height="7" viewBox="0 0 11 7"><path d="M0 3.2 L4.5 3.2" stroke="#aaa" stroke-width="1"/><path d="M4.5 0.3 L4.5 6.3 M10 0.5 L10 6.5" stroke="#aaa" stroke-width="1.1"/><rect x="4.5" y="1.6" width="5.5" height="3.4" fill="none" stroke="#aaa" stroke-width="0.9"/></svg>
<div class="a" style="left:544.40px;top:1px;width:1px;height:172px;background:#d6dbe1"></div>
<div class="a th" style="left:548.90px;top:7.2px;text-align:left">更改组</div>
<svg class="a" style="left:615.0px;top:10.5px" width="11" height="7" viewBox="0 0 11 7"><path d="M0 3.2 L4.5 3.2" stroke="#aaa" stroke-width="1"/><path d="M4.5 0.3 L4.5 6.3 M10 0.5 L10 6.5" stroke="#aaa" stroke-width="1.1"/><rect x="4.5" y="1.6" width="5.5" height="3.4" fill="none" stroke="#aaa" stroke-width="0.9"/></svg>
<div class="a" style="left:634.00px;top:1px;width:1px;height:172px;background:#d6dbe1"></div>
<div class="a th" style="left:638.50px;top:7.2px;text-align:left">打印设置</div>
<svg class="a" style="left:704.7px;top:10.5px" width="11" height="7" viewBox="0 0 11 7"><path d="M0 3.2 L4.5 3.2" stroke="#aaa" stroke-width="1"/><path d="M4.5 0.3 L4.5 6.3 M10 0.5 L10 6.5" stroke="#aaa" stroke-width="1.1"/><rect x="4.5" y="1.6" width="5.5" height="3.4" fill="none" stroke="#aaa" stroke-width="0.9"/></svg>
<div class="a" style="left:723.70px;top:1px;width:1px;height:172px;background:#d6dbe1"></div>
<div class="a th" style="left:728.20px;top:7.2px;text-align:left">其他权限1</div>
<svg class="a" style="left:794.0px;top:10.5px" width="11" height="7" viewBox="0 0 11 7"><path d="M0 3.2 L4.5 3.2" stroke="#aaa" stroke-width="1"/><path d="M4.5 0.3 L4.5 6.3 M10 0.5 L10 6.5" stroke="#aaa" stroke-width="1.1"/><rect x="4.5" y="1.6" width="5.5" height="3.4" fill="none" stroke="#aaa" stroke-width="0.9"/></svg>
<div class="a" style="left:813.00px;top:1px;width:1px;height:172px;background:#d6dbe1"></div>
<div class="a th" style="left:817.50px;top:7.2px;text-align:left">其他权限2</div>
<div class="a" style="left:862.50px;top:1px;width:1px;height:172px;background:#d6dbe1"></div>
<div class="a" style="left:3px;top:27.80px;width:97.90px;height:11.00px;background:#fef7e7;border-bottom:1px solid #d6dbe1"></div>
<div class="a" style="left:3px;top:27.80px;width:97.90px;height:10.00px;overflow:hidden"><div class="a fn" style="left:2px;top:-11.50px;width:97.90px">公有资源</div></div>
<div class="a" style="left:101.90px;top:27.80px;width:53.80px;height:11.00px;background:#90ee90;border-bottom:1px solid #d6dbe1;overflow:hidden">
<svg class="a" style="left:25.70px;top:-10.20px" width="7" height="12" viewBox="0 0 7 12"><path d="M0.3 6.6 L2 5.6 L4.1 9.6 L6.1 0.3 L6.7 0.4 L4.4 11.4 L3.7 11.4 L1.5 7 Z" fill="#555"/></svg>
</div>
<div class="a" style="left:156.70px;top:27.80px;width:55.00px;height:11.00px;background:#90ee90;border-bottom:1px solid #d6dbe1;overflow:hidden">
<svg class="a" style="left:26.30px;top:-10.20px" width="7" height="12" viewBox="0 0 7 12"><path d="M0.3 6.6 L2 5.6 L4.1 9.6 L6.1 0.3 L6.7 0.4 L4.4 11.4 L3.7 11.4 L1.5 7 Z" fill="#555"/></svg>
</div>
<div class="a" style="left:212.70px;top:27.80px;width:54.30px;height:11.00px;background:#90ee90;border-bottom:1px solid #d6dbe1;overflow:hidden">
<svg class="a" style="left:25.95px;top:-10.20px" width="7" height="12" viewBox="0 0 7 12"><path d="M0.3 6.6 L2 5.6 L4.1 9.6 L6.1 0.3 L6.7 0.4 L4.4 11.4 L3.7 11.4 L1.5 7 Z" fill="#555"/></svg>
</div>
<div class="a" style="left:268.00px;top:27.80px;width:54.70px;height:11.00px;background:#90ee90;border-bottom:1px solid #d6dbe1;overflow:hidden">
<svg class="a" style="left:26.15px;top:-10.20px" width="7" height="12" viewBox="0 0 7 12"><path d="M0.3 6.6 L2 5.6 L4.1 9.6 L6.1 0.3 L6.7 0.4 L4.4 11.4 L3.7 11.4 L1.5 7 Z" fill="#555"/></svg>
</div>
<div class="a" style="left:323.70px;top:27.80px;width:54.60px;height:11.00px;background:#cbcbcb;border-bottom:1px solid #d6dbe1;overflow:hidden">
</div>
<div class="a" style="left:379.30px;top:27.80px;width:54.60px;height:11.00px;background:#90ee90;border-bottom:1px solid #d6dbe1;overflow:hidden">
<svg class="a" style="left:26.10px;top:-10.20px" width="7" height="12" viewBox="0 0 7 12"><path d="M0.3 6.6 L2 5.6 L4.1 9.6 L6.1 0.3 L6.7 0.4 L4.4 11.4 L3.7 11.4 L1.5 7 Z" fill="#555"/></svg>
</div>
<div class="a" style="left:434.90px;top:27.80px;width:53.90px;height:11.00px;background:#90ee90;border-bottom:1px solid #d6dbe1;overflow:hidden">
<svg class="a" style="left:25.75px;top:-10.20px" width="7" height="12" viewBox="0 0 7 12"><path d="M0.3 6.6 L2 5.6 L4.1 9.6 L6.1 0.3 L6.7 0.4 L4.4 11.4 L3.7 11.4 L1.5 7 Z" fill="#555"/></svg>
</div>
<div class="a" style="left:489.80px;top:27.80px;width:54.60px;height:11.00px;background:#cbcbcb;border-bottom:1px solid #d6dbe1;overflow:hidden">
</div>
<div class="a" style="left:545.40px;top:27.80px;width:88.60px;height:11.00px;background:#cbcbcb;border-bottom:1px solid #d6dbe1;overflow:hidden">
</div>
<div class="a" style="left:635.00px;top:27.80px;width:88.70px;height:11.00px;background:#cbcbcb;border-bottom:1px solid #d6dbe1;overflow:hidden">
</div>
<div class="a" style="left:724.70px;top:27.80px;width:88.30px;height:11.00px;background:#90ee90;border-bottom:1px solid #d6dbe1;overflow:hidden">
<div class="a chk" style="left:2.5px;top:-11.50px;width:88.30px"><span style="display:inline-block;width:7px;height:12px;position:relative;vertical-align:-1px"><svg style="position:absolute;left:0;top:0" width="7" height="12" viewBox="0 0 7 12"><path d="M0.3 6.6 L2 5.6 L4.1 9.6 L6.1 0.3 L6.7 0.4 L4.4 11.4 L3.7 11.4 L1.5 7 Z" fill="#555"/></svg></span>可借出</div>
</div>
<div class="a" style="left:814.00px;top:27.80px;width:48.50px;height:11.00px;background:#90ee90;border-bottom:1px solid #d6dbe1;overflow:hidden">
<svg class="a" style="left:18.50px;top:-10.20px" width="7" height="12" viewBox="0 0 7 12"><path d="M0.3 6.6 L2 5.6 L4.1 9.6 L6.1 0.3 L6.7 0.4 L4.4 11.4 L3.7 11.4 L1.5 7 Z" fill="#555"/></svg>
</div>
<div class="a" style="left:3px;top:38.50px;width:97.90px;height:24.00px;background:#fef7e7;border-bottom:1px solid #d6dbe1"></div>
<div class="a" style="left:3px;top:38.50px;width:97.90px;height:23.00px;overflow:hidden"><div class="a fn" style="left:2px;top:3.50px;width:97.90px">车辆维护</div></div>
<div class="a" style="left:101.90px;top:38.50px;width:53.80px;height:24.00px;background:#90ee90;border-bottom:1px solid #d6dbe1;overflow:hidden">
<svg class="a" style="left:25.70px;top:4.80px" width="7" height="12" viewBox="0 0 7 12"><path d="M0.3 6.6 L2 5.6 L4.1 9.6 L6.1 0.3 L6.7 0.4 L4.4 11.4 L3.7 11.4 L1.5 7 Z" fill="#555"/></svg>
</div>
<div class="a" style="left:156.70px;top:38.50px;width:55.00px;height:24.00px;background:#90ee90;border-bottom:1px solid #d6dbe1;overflow:hidden">
<svg class="a" style="left:26.30px;top:4.80px" width="7" height="12" viewBox="0 0 7 12"><path d="M0.3 6.6 L2 5.6 L4.1 9.6 L6.1 0.3 L6.7 0.4 L4.4 11.4 L3.7 11.4 L1.5 7 Z" fill="#555"/></svg>
</div>
<div class="a" style="left:212.70px;top:38.50px;width:54.30px;height:24.00px;background:#90ee90;border-bottom:1px solid #d6dbe1;overflow:hidden">
<svg class="a" style="left:25.95px;top:4.80px" width="7" height="12" viewBox="0 0 7 12"><path d="M0.3 6.6 L2 5.6 L4.1 9.6 L6.1 0.3 L6.7 0.4 L4.4 11.4 L3.7 11.4 L1.5 7 Z" fill="#555"/></svg>
</div>
<div class="a" style="left:268.00px;top:38.50px;width:54.70px;height:24.00px;background:#90ee90;border-bottom:1px solid #d6dbe1;overflow:hidden">
<svg class="a" style="left:26.15px;top:4.80px" width="7" height="12" viewBox="0 0 7 12"><path d="M0.3 6.6 L2 5.6 L4.1 9.6 L6.1 0.3 L6.7 0.4 L4.4 11.4 L3.7 11.4 L1.5 7 Z" fill="#555"/></svg>
</div>
<div class="a" style="left:323.70px;top:38.50px;width:54.60px;height:24.00px;background:#cbcbcb;border-bottom:1px solid #d6dbe1;overflow:hidden">
</div>
<div class="a" style="left:379.30px;top:38.50px;width:54.60px;height:24.00px;background:#90ee90;border-bottom:1px solid #d6dbe1;overflow:hidden">
<svg class="a" style="left:26.10px;top:4.80px" width="7" height="12" viewBox="0 0 7 12"><path d="M0.3 6.6 L2 5.6 L4.1 9.6 L6.1 0.3 L6.7 0.4 L4.4 11.4 L3.7 11.4 L1.5 7 Z" fill="#555"/></svg>
</div>
<div class="a" style="left:434.90px;top:38.50px;width:53.90px;height:24.00px;background:#90ee90;border-bottom:1px solid #d6dbe1;overflow:hidden">
<svg class="a" style="left:25.75px;top:4.80px" width="7" height="12" viewBox="0 0 7 12"><path d="M0.3 6.6 L2 5.6 L4.1 9.6 L6.1 0.3 L6.7 0.4 L4.4 11.4 L3.7 11.4 L1.5 7 Z" fill="#555"/></svg>
</div>
<div class="a" style="left:489.80px;top:38.50px;width:54.60px;height:24.00px;background:#cbcbcb;border-bottom:1px solid #d6dbe1;overflow:hidden">
</div>
<div class="a" style="left:545.40px;top:38.50px;width:88.60px;height:24.00px;background:#cbcbcb;border-bottom:1px solid #d6dbe1;overflow:hidden">
</div>
<div class="a" style="left:635.00px;top:38.50px;width:88.70px;height:24.00px;background:#cbcbcb;border-bottom:1px solid #d6dbe1;overflow:hidden">
</div>
<div class="a" style="left:724.70px;top:38.50px;width:88.30px;height:24.00px;background:#cbcbcb;border-bottom:1px solid #d6dbe1;overflow:hidden">
</div>
<div class="a" style="left:814.00px;top:38.50px;width:48.50px;height:24.00px;background:#cbcbcb;border-bottom:1px solid #d6dbe1;overflow:hidden">
</div>
<div class="a" style="left:3px;top:62.50px;width:97.90px;height:24.00px;background:#fef7e7;border-bottom:1px solid #d6dbe1"></div>
<div class="a" style="left:3px;top:62.50px;width:97.90px;height:23.00px;overflow:hidden"><div class="a fn" style="left:2px;top:3.50px;width:97.90px">车辆使用</div></div>
<div class="a" style="left:101.90px;top:62.50px;width:53.80px;height:24.00px;background:#cbcbcb;border-bottom:1px solid #d6dbe1;overflow:hidden">
</div>
<div class="a" style="left:156.70px;top:62.50px;width:55.00px;height:24.00px;background:#90ee90;border-bottom:1px solid #d6dbe1;overflow:hidden">
<svg class="a" style="left:26.30px;top:4.80px" width="7" height="12" viewBox="0 0 7 12"><path d="M0.3 6.6 L2 5.6 L4.1 9.6 L6.1 0.3 L6.7 0.4 L4.4 11.4 L3.7 11.4 L1.5 7 Z" fill="#555"/></svg>
</div>
<div class="a" style="left:212.70px;top:62.50px;width:54.30px;height:24.00px;background:#cbcbcb;border-bottom:1px solid #d6dbe1;overflow:hidden">
</div>
<div class="a" style="left:268.00px;top:62.50px;width:54.70px;height:24.00px;background:#cbcbcb;border-bottom:1px solid #d6dbe1;overflow:hidden">
</div>
<div class="a" style="left:323.70px;top:62.50px;width:54.60px;height:24.00px;background:#cbcbcb;border-bottom:1px solid #d6dbe1;overflow:hidden">
</div>
<div class="a" style="left:379.30px;top:62.50px;width:54.60px;height:24.00px;background:#90ee90;border-bottom:1px solid #d6dbe1;overflow:hidden">
<svg class="a" style="left:26.10px;top:4.80px" width="7" height="12" viewBox="0 0 7 12"><path d="M0.3 6.6 L2 5.6 L4.1 9.6 L6.1 0.3 L6.7 0.4 L4.4 11.4 L3.7 11.4 L1.5 7 Z" fill="#555"/></svg>
</div>
<div class="a" style="left:434.90px;top:62.50px;width:53.90px;height:24.00px;background:#90ee90;border-bottom:1px solid #d6dbe1;overflow:hidden">
<svg class="a" style="left:25.75px;top:4.80px" width="7" height="12" viewBox="0 0 7 12"><path d="M0.3 6.6 L2 5.6 L4.1 9.6 L6.1 0.3 L6.7 0.4 L4.4 11.4 L3.7 11.4 L1.5 7 Z" fill="#555"/></svg>
</div>
<div class="a" style="left:489.80px;top:62.50px;width:54.60px;height:24.00px;background:#cbcbcb;border-bottom:1px solid #d6dbe1;overflow:hidden">
</div>
<div class="a" style="left:545.40px;top:62.50px;width:88.60px;height:24.00px;background:#cbcbcb;border-bottom:1px solid #d6dbe1;overflow:hidden">
</div>
<div class="a" style="left:635.00px;top:62.50px;width:88.70px;height:24.00px;background:#cbcbcb;border-bottom:1px solid #d6dbe1;overflow:hidden">
</div>
<div class="a" style="left:724.70px;top:62.50px;width:88.30px;height:24.00px;background:#cbcbcb;border-bottom:1px solid #d6dbe1;overflow:hidden">
</div>
<div class="a" style="left:814.00px;top:62.50px;width:48.50px;height:24.00px;background:#cbcbcb;border-bottom:1px solid #d6dbe1;overflow:hidden">
</div>
<div class="a" style="left:3px;top:86.50px;width:97.90px;height:24.00px;background:#fef7e7;border-bottom:1px solid #d6dbe1"></div>
<div class="a" style="left:3px;top:86.50px;width:97.90px;height:23.00px;overflow:hidden"><div class="a fn" style="left:2px;top:3.50px;width:97.90px">签报管理</div></div>
<div class="a" style="left:101.90px;top:86.50px;width:53.80px;height:24.00px;background:#90ee90;border-bottom:1px solid #d6dbe1;overflow:hidden">
<svg class="a" style="left:25.70px;top:4.80px" width="7" height="12" viewBox="0 0 7 12"><path d="M0.3 6.6 L2 5.6 L4.1 9.6 L6.1 0.3 L6.7 0.4 L4.4 11.4 L3.7 11.4 L1.5 7 Z" fill="#555"/></svg>
</div>
<div class="a" style="left:156.70px;top:86.50px;width:55.00px;height:24.00px;background:#90ee90;border-bottom:1px solid #d6dbe1;overflow:hidden">
<svg class="a" style="left:26.30px;top:4.80px" width="7" height="12" viewBox="0 0 7 12"><path d="M0.3 6.6 L2 5.6 L4.1 9.6 L6.1 0.3 L6.7 0.4 L4.4 11.4 L3.7 11.4 L1.5 7 Z" fill="#555"/></svg>
</div>
<div class="a" style="left:212.70px;top:86.50px;width:54.30px;height:24.00px;background:#90ee90;border-bottom:1px solid #d6dbe1;overflow:hidden">
<svg class="a" style="left:25.95px;top:4.80px" width="7" height="12" viewBox="0 0 7 12"><path d="M0.3 6.6 L2 5.6 L4.1 9.6 L6.1 0.3 L6.7 0.4 L4.4 11.4 L3.7 11.4 L1.5 7 Z" fill="#555"/></svg>
</div>
<div class="a" style="left:268.00px;top:86.50px;width:54.70px;height:24.00px;background:#90ee90;border-bottom:1px solid #d6dbe1;overflow:hidden">
<svg class="a" style="left:26.15px;top:4.80px" width="7" height="12" viewBox="0 0 7 12"><path d="M0.3 6.6 L2 5.6 L4.1 9.6 L6.1 0.3 L6.7 0.4 L4.4 11.4 L3.7 11.4 L1.5 7 Z" fill="#555"/></svg>
</div>
<div class="a" style="left:323.70px;top:86.50px;width:54.60px;height:24.00px;background:#90ee90;border-bottom:1px solid #d6dbe1;overflow:hidden">
<svg class="a" style="left:26.10px;top:4.80px" width="7" height="12" viewBox="0 0 7 12"><path d="M0.3 6.6 L2 5.6 L4.1 9.6 L6.1 0.3 L6.7 0.4 L4.4 11.4 L3.7 11.4 L1.5 7 Z" fill="#555"/></svg>
</div>
<div class="a" style="left:379.30px;top:86.50px;width:54.60px;height:24.00px;background:#90ee90;border-bottom:1px solid #d6dbe1;overflow:hidden">
<svg class="a" style="left:26.10px;top:4.80px" width="7" height="12" viewBox="0 0 7 12"><path d="M0.3 6.6 L2 5.6 L4.1 9.6 L6.1 0.3 L6.7 0.4 L4.4 11.4 L3.7 11.4 L1.5 7 Z" fill="#555"/></svg>
</div>
<div class="a" style="left:434.90px;top:86.50px;width:53.90px;height:24.00px;background:#90ee90;border-bottom:1px solid #d6dbe1;overflow:hidden">
<svg class="a" style="left:25.75px;top:4.80px" width="7" height="12" viewBox="0 0 7 12"><path d="M0.3 6.6 L2 5.6 L4.1 9.6 L6.1 0.3 L6.7 0.4 L4.4 11.4 L3.7 11.4 L1.5 7 Z" fill="#555"/></svg>
</div>
<div class="a" style="left:489.80px;top:86.50px;width:54.60px;height:24.00px;background:#cbcbcb;border-bottom:1px solid #d6dbe1;overflow:hidden">
</div>
<div class="a" style="left:545.40px;top:86.50px;width:88.60px;height:24.00px;background:#cbcbcb;border-bottom:1px solid #d6dbe1;overflow:hidden">
</div>
<div class="a" style="left:635.00px;top:86.50px;width:88.70px;height:24.00px;background:#90ee90;border-bottom:1px solid #d6dbe1;overflow:hidden">
<svg class="a" style="left:43.15px;top:4.80px" width="7" height="12" viewBox="0 0 7 12"><path d="M0.3 6.6 L2 5.6 L4.1 9.6 L6.1 0.3 L6.7 0.4 L4.4 11.4 L3.7 11.4 L1.5 7 Z" fill="#555"/></svg>
</div>
<div class="a" style="left:724.70px;top:86.50px;width:88.30px;height:24.00px;background:#90ee90;border-bottom:1px solid #d6dbe1;overflow:hidden">
<div class="a chk" style="left:2.5px;top:3.50px;width:88.30px"><span style="display:inline-block;width:7px;height:12px;position:relative;vertical-align:-1px"><svg style="position:absolute;left:0;top:0" width="7" height="12" viewBox="0 0 7 12"><path d="M0.3 6.6 L2 5.6 L4.1 9.6 L6.1 0.3 L6.7 0.4 L4.4 11.4 L3.7 11.4 L1.5 7 Z" fill="#555"/></svg></span>封发</div>
</div>
<div class="a" style="left:814.00px;top:86.50px;width:48.50px;height:24.00px;background:#90ee90;border-bottom:1px solid #d6dbe1;overflow:hidden">
<svg class="a" style="left:18.50px;top:4.80px" width="7" height="12" viewBox="0 0 7 12"><path d="M0.3 6.6 L2 5.6 L4.1 9.6 L6.1 0.3 L6.7 0.4 L4.4 11.4 L3.7 11.4 L1.5 7 Z" fill="#555"/></svg>
</div>
<div class="a" style="left:3px;top:110.50px;width:97.90px;height:24.00px;background:#fef7e7;border-bottom:1px solid #d6dbe1"></div>
<div class="a" style="left:3px;top:110.50px;width:97.90px;height:23.00px;overflow:hidden"><div class="a fn" style="left:2px;top:3.50px;width:97.90px">电子文档借阅</div></div>
<div class="a" style="left:101.90px;top:110.50px;width:53.80px;height:24.00px;background:#90ee90;border-bottom:1px solid #d6dbe1;overflow:hidden">
<svg class="a" style="left:25.70px;top:4.80px" width="7" height="12" viewBox="0 0 7 12"><path d="M0.3 6.6 L2 5.6 L4.1 9.6 L6.1 0.3 L6.7 0.4 L4.4 11.4 L3.7 11.4 L1.5 7 Z" fill="#555"/></svg>
</div>
<div class="a" style="left:156.70px;top:110.50px;width:55.00px;height:24.00px;background:#90ee90;border-bottom:1px solid #d6dbe1;overflow:hidden">
<svg class="a" style="left:26.30px;top:4.80px" width="7" height="12" viewBox="0 0 7 12"><path d="M0.3 6.6 L2 5.6 L4.1 9.6 L6.1 0.3 L6.7 0.4 L4.4 11.4 L3.7 11.4 L1.5 7 Z" fill="#555"/></svg>
</div>
<div class="a" style="left:212.70px;top:110.50px;width:54.30px;height:24.00px;background:#90ee90;border-bottom:1px solid #d6dbe1;overflow:hidden">
<svg class="a" style="left:25.95px;top:4.80px" width="7" height="12" viewBox="0 0 7 12"><path d="M0.3 6.6 L2 5.6 L4.1 9.6 L6.1 0.3 L6.7 0.4 L4.4 11.4 L3.7 11.4 L1.5 7 Z" fill="#555"/></svg>
</div>
<div class="a" style="left:268.00px;top:110.50px;width:54.70px;height:24.00px;background:#90ee90;border-bottom:1px solid #d6dbe1;overflow:hidden">
<svg class="a" style="left:26.15px;top:4.80px" width="7" height="12" viewBox="0 0 7 12"><path d="M0.3 6.6 L2 5.6 L4.1 9.6 L6.1 0.3 L6.7 0.4 L4.4 11.4 L3.7 11.4 L1.5 7 Z" fill="#555"/></svg>
</div>
<div class="a" style="left:323.70px;top:110.50px;width:54.60px;height:24.00px;background:#90ee90;border-bottom:1px solid #d6dbe1;overflow:hidden">
<svg class="a" style="left:26.10px;top:4.80px" width="7" height="12" viewBox="0 0 7 12"><path d="M0.3 6.6 L2 5.6 L4.1 9.6 L6.1 0.3 L6.7 0.4 L4.4 11.4 L3.7 11.4 L1.5 7 Z" fill="#555"/></svg>
</div>
<div class="a" style="left:379.30px;top:110.50px;width:54.60px;height:24.00px;background:#90ee90;border-bottom:1px solid #d6dbe1;overflow:hidden">
<svg class="a" style="left:26.10px;top:4.80px" width="7" height="12" viewBox="0 0 7 12"><path d="M0.3 6.6 L2 5.6 L4.1 9.6 L6.1 0.3 L6.7 0.4 L4.4 11.4 L3.7 11.4 L1.5 7 Z" fill="#555"/></svg>
</div>
<div class="a" style="left:434.90px;top:110.50px;width:53.90px;height:24.00px;background:#90ee90;border-bottom:1px solid #d6dbe1;overflow:hidden">
<svg class="a" style="left:25.75px;top:4.80px" width="7" height="12" viewBox="0 0 7 12"><path d="M0.3 6.6 L2 5.6 L4.1 9.6 L6.1 0.3 L6.7 0.4 L4.4 11.4 L3.7 11.4 L1.5 7 Z" fill="#555"/></svg>
</div>
<div class="a" style="left:489.80px;top:110.50px;width:54.60px;height:24.00px;background:#cbcbcb;border-bottom:1px solid #d6dbe1;overflow:hidden">
</div>
<div class="a" style="left:545.40px;top:110.50px;width:88.60px;height:24.00px;background:#cbcbcb;border-bottom:1px solid #d6dbe1;overflow:hidden">
</div>
<div class="a" style="left:635.00px;top:110.50px;width:88.70px;height:24.00px;background:#90ee90;border-bottom:1px solid #d6dbe1;overflow:hidden">
<svg class="a" style="left:43.15px;top:4.80px" width="7" height="12" viewBox="0 0 7 12"><path d="M0.3 6.6 L2 5.6 L4.1 9.6 L6.1 0.3 L6.7 0.4 L4.4 11.4 L3.7 11.4 L1.5 7 Z" fill="#555"/></svg>
</div>
<div class="a" style="left:724.70px;top:110.50px;width:88.30px;height:24.00px;background:#cbcbcb;border-bottom:1px solid #d6dbe1;overflow:hidden">
</div>
<div class="a" style="left:814.00px;top:110.50px;width:48.50px;height:24.00px;background:#cbcbcb;border-bottom:1px solid #d6dbe1;overflow:hidden">
</div>
<div class="a" style="left:3px;top:134.50px;width:97.90px;height:24.00px;background:#fef7e7;border-bottom:1px solid #d6dbe1"></div>
<div class="a" style="left:3px;top:134.50px;width:97.90px;height:23.00px;overflow:hidden"><div class="a fn" style="left:2px;top:3.50px;width:97.90px">公共文档</div></div>
<div class="a" style="left:101.90px;top:134.50px;width:53.80px;height:24.00px;background:#cbcbcb;border-bottom:1px solid #d6dbe1;overflow:hidden">
</div>
<div class="a" style="left:156.70px;top:134.50px;width:55.00px;height:24.00px;background:#90ee90;border-bottom:1px solid #d6dbe1;overflow:hidden">
<svg class="a" style="left:26.30px;top:4.80px" width="7" height="12" viewBox="0 0 7 12"><path d="M0.3 6.6 L2 5.6 L4.1 9.6 L6.1 0.3 L6.7 0.4 L4.4 11.4 L3.7 11.4 L1.5 7 Z" fill="#555"/></svg>
</div>
<div class="a" style="left:212.70px;top:134.50px;width:54.30px;height:24.00px;background:#cbcbcb;border-bottom:1px solid #d6dbe1;overflow:hidden">
</div>
<div class="a" style="left:268.00px;top:134.50px;width:54.70px;height:24.00px;background:#cbcbcb;border-bottom:1px solid #d6dbe1;overflow:hidden">
</div>
<div class="a" style="left:323.70px;top:134.50px;width:54.60px;height:24.00px;background:#cbcbcb;border-bottom:1px solid #d6dbe1;overflow:hidden">
</div>
<div class="a" style="left:379.30px;top:134.50px;width:54.60px;height:24.00px;background:#cbcbcb;border-bottom:1px solid #d6dbe1;overflow:hidden">
</div>
<div class="a" style="left:434.90px;top:134.50px;width:53.90px;height:24.00px;background:#cbcbcb;border-bottom:1px solid #d6dbe1;overflow:hidden">
</div>
<div class="a" style="left:489.80px;top:134.50px;width:54.60px;height:24.00px;background:#cbcbcb;border-bottom:1px solid #d6dbe1;overflow:hidden">
</div>
<div class="a" style="left:545.40px;top:134.50px;width:88.60px;height:24.00px;background:#cbcbcb;border-bottom:1px solid #d6dbe1;overflow:hidden">
</div>
<div class="a" style="left:635.00px;top:134.50px;width:88.70px;height:24.00px;background:#cbcbcb;border-bottom:1px solid #d6dbe1;overflow:hidden">
</div>
<div class="a" style="left:724.70px;top:134.50px;width:88.30px;height:24.00px;background:#cbcbcb;border-bottom:1px solid #d6dbe1;overflow:hidden">
</div>
<div class="a" style="left:814.00px;top:134.50px;width:48.50px;height:24.00px;background:#cbcbcb;border-bottom:1px solid #d6dbe1;overflow:hidden">
</div>
<div class="a" style="left:3px;top:158.50px;width:97.90px;height:24.00px;background:#fef7e7;border-bottom:1px solid #d6dbe1"></div>
<div class="a" style="left:3px;top:158.50px;width:97.90px;height:23.00px;overflow:hidden"><div class="a fn" style="left:2px;top:3.50px;width:97.90px">费用报销单</div></div>
<div class="a" style="left:101.90px;top:158.50px;width:53.80px;height:24.00px;background:#90ee90;border-bottom:1px solid #d6dbe1;overflow:hidden">
<svg class="a" style="left:25.70px;top:4.80px" width="7" height="12" viewBox="0 0 7 12"><path d="M0.3 6.6 L2 5.6 L4.1 9.6 L6.1 0.3 L6.7 0.4 L4.4 11.4 L3.7 11.4 L1.5 7 Z" fill="#555"/></svg>
</div>
<div class="a" style="left:156.70px;top:158.50px;width:55.00px;height:24.00px;background:#90ee90;border-bottom:1px solid #d6dbe1;overflow:hidden">
<svg class="a" style="left:26.30px;top:4.80px" width="7" height="12" viewBox="0 0 7 12"><path d="M0.3 6.6 L2 5.6 L4.1 9.6 L6.1 0.3 L6.7 0.4 L4.4 11.4 L3.7 11.4 L1.5 7 Z" fill="#555"/></svg>
</div>
<div class="a" style="left:212.70px;top:158.50px;width:54.30px;height:24.00px;background:#90ee90;border-bottom:1px solid #d6dbe1;overflow:hidden">
<svg class="a" style="left:25.95px;top:4.80px" width="7" height="12" viewBox="0 0 7 12"><path d="M0.3 6.6 L2 5.6 L4.1 9.6 L6.1 0.3 L6.7 0.4 L4.4 11.4 L3.7 11.4 L1.5 7 Z" fill="#555"/></svg>
</div>
<div class="a" style="left:268.00px;top:158.50px;width:54.70px;height:24.00px;background:#90ee90;border-bottom:1px solid #d6dbe1;overflow:hidden">
<svg class="a" style="left:26.15px;top:4.80px" width="7" height="12" viewBox="0 0 7 12"><path d="M0.3 6.6 L2 5.6 L4.1 9.6 L6.1 0.3 L6.7 0.4 L4.4 11.4 L3.7 11.4 L1.5 7 Z" fill="#555"/></svg>
</div>
<div class="a" style="left:323.70px;top:158.50px;width:54.60px;height:24.00px;background:#90ee90;border-bottom:1px solid #d6dbe1;overflow:hidden">
<svg class="a" style="left:26.10px;top:4.80px" width="7" height="12" viewBox="0 0 7 12"><path d="M0.3 6.6 L2 5.6 L4.1 9.6 L6.1 0.3 L6.7 0.4 L4.4 11.4 L3.7 11.4 L1.5 7 Z" fill="#555"/></svg>
</div>
<div class="a" style="left:379.30px;top:158.50px;width:54.60px;height:24.00px;background:#90ee90;border-bottom:1px solid #d6dbe1;overflow:hidden">
<svg class="a" style="left:26.10px;top:4.80px" width="7" height="12" viewBox="0 0 7 12"><path d="M0.3 6.6 L2 5.6 L4.1 9.6 L6.1 0.3 L6.7 0.4 L4.4 11.4 L3.7 11.4 L1.5 7 Z" fill="#555"/></svg>
</div>
<div class="a" style="left:434.90px;top:158.50px;width:53.90px;height:24.00px;background:#90ee90;border-bottom:1px solid #d6dbe1;overflow:hidden">
<svg class="a" style="left:25.75px;top:4.80px" width="7" height="12" viewBox="0 0 7 12"><path d="M0.3 6.6 L2 5.6 L4.1 9.6 L6.1 0.3 L6.7 0.4 L4.4 11.4 L3.7 11.4 L1.5 7 Z" fill="#555"/></svg>
</div>
<div class="a" style="left:489.80px;top:158.50px;width:54.60px;height:24.00px;background:#cbcbcb;border-bottom:1px solid #d6dbe1;overflow:hidden">
</div>
<div class="a" style="left:545.40px;top:158.50px;width:88.60px;height:24.00px;background:#cbcbcb;border-bottom:1px solid #d6dbe1;overflow:hidden">
</div>
<div class="a" style="left:635.00px;top:158.50px;width:88.70px;height:24.00px;background:#90ee90;border-bottom:1px solid #d6dbe1;overflow:hidden">
<svg class="a" style="left:43.15px;top:4.80px" width="7" height="12" viewBox="0 0 7 12"><path d="M0.3 6.6 L2 5.6 L4.1 9.6 L6.1 0.3 L6.7 0.4 L4.4 11.4 L3.7 11.4 L1.5 7 Z" fill="#555"/></svg>
</div>
<div class="a" style="left:724.70px;top:158.50px;width:88.30px;height:24.00px;background:#90ee90;border-bottom:1px solid #d6dbe1;overflow:hidden">
<div class="a chk" style="left:2.5px;top:3.50px;width:88.30px"><span style="display:inline-block;width:7px;height:12px;position:relative;vertical-align:-1px"><svg style="position:absolute;left:0;top:0" width="7" height="12" viewBox="0 0 7 12"><path d="M0.3 6.6 L2 5.6 L4.1 9.6 L6.1 0.3 L6.7 0.4 L4.4 11.4 L3.7 11.4 L1.5 7 Z" fill="#555"/></svg></span>只看自己</div>
</div>
<div class="a" style="left:814.00px;top:158.50px;width:48.50px;height:24.00px;background:#90ee90;border-bottom:1px solid #d6dbe1;overflow:hidden">
<svg class="a" style="left:18.50px;top:4.80px" width="7" height="12" viewBox="0 0 7 12"><path d="M0.3 6.6 L2 5.6 L4.1 9.6 L6.1 0.3 L6.7 0.4 L4.4 11.4 L3.7 11.4 L1.5 7 Z" fill="#555"/></svg>
</div>
<div class="a" style="left:100.90px;top:27px;width:1px;height:146px;background:#d6dbe1"></div>
<div class="a" style="left:155.70px;top:27px;width:1px;height:146px;background:#d6dbe1"></div>
<div class="a" style="left:211.70px;top:27px;width:1px;height:146px;background:#d6dbe1"></div>
<div class="a" style="left:267.00px;top:27px;width:1px;height:146px;background:#d6dbe1"></div>
<div class="a" style="left:322.70px;top:27px;width:1px;height:146px;background:#d6dbe1"></div>
<div class="a" style="left:378.30px;top:27px;width:1px;height:146px;background:#d6dbe1"></div>
<div class="a" style="left:433.90px;top:27px;width:1px;height:146px;background:#d6dbe1"></div>
<div class="a" style="left:488.80px;top:27px;width:1px;height:146px;background:#d6dbe1"></div>
<div class="a" style="left:544.40px;top:27px;width:1px;height:146px;background:#d6dbe1"></div>
<div class="a" style="left:634.00px;top:27px;width:1px;height:146px;background:#d6dbe1"></div>
<div class="a" style="left:723.70px;top:27px;width:1px;height:146px;background:#d6dbe1"></div>
<div class="a" style="left:813.00px;top:27px;width:1px;height:146px;background:#d6dbe1"></div>
<div class="a" style="left:862.50px;top:27px;width:1px;height:146px;background:#d6dbe1"></div>
</div>
<div class="a" style="left:1263px;top:517px;width:11px;height:57px;background:#c8c8c8"></div>
<div class="a" style="left:199px;top:647.5px;width:1105px;height:1px;background:#e0e0e0"></div>
<div class="a" style="left:1298px;top:123px;width:6px;height:435px;background:#c8c8c8"></div>
<div class="a" style="left:1179.5px;top:628px;font-family:'Liberation Mono',monospace;font-weight:bold;font-size:15.2px;line-height:16px;color:#fff;white-space:nowrap;text-shadow:0 0 1px rgba(0,0,0,0.06)">yingxiong100.com</div>

</body></html>
